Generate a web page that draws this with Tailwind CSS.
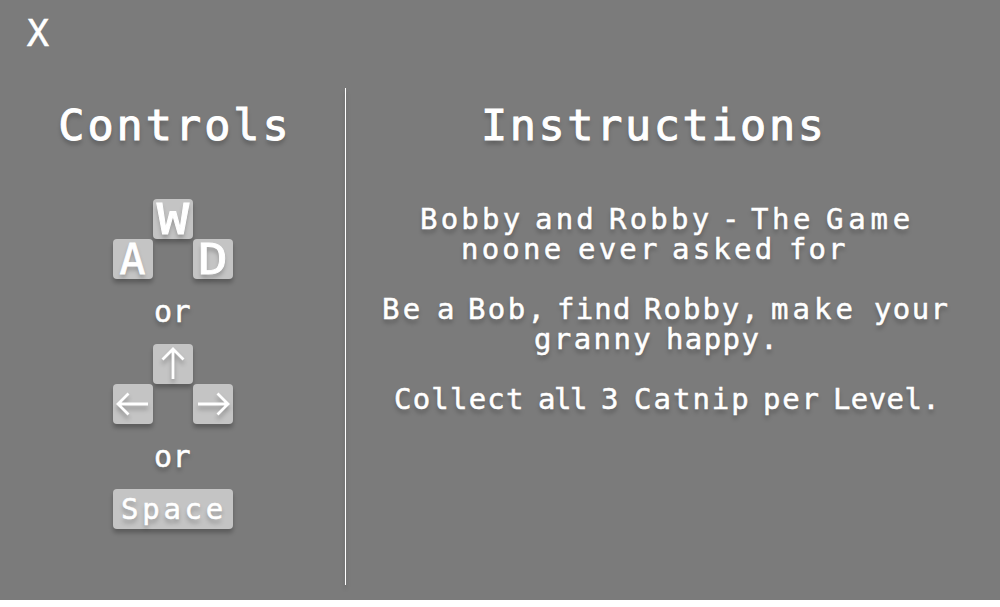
<!DOCTYPE html>
<html lang="en">
<head>
<meta charset="utf-8">
<title>Controls and Instructions</title>
<script src="https://cdn.jsdelivr.net/npm/@tailwindcss/browser@4"></script>
</head>
<body class="bg-white">
<main class="relative flex h-[600px] w-[1000px] overflow-hidden bg-[#7b7b7b] font-['DejaVu_Sans_Mono',monospace] text-white [-webkit-text-stroke:0.5px_white]">
  <button class="absolute left-[26px] top-[14px] h-10 w-6 text-[37px] leading-10" aria-label="Close">X</button>

  <section class="flex w-[345px] flex-col items-center pt-[100px] [text-shadow:0_4px_4px_rgba(0,0,0,0.25)]">
    <h1 class="h-[50px] whitespace-nowrap pl-[5px] text-[43.5px] leading-[50px] tracking-[3px] [-webkit-text-stroke:1px_white]">Controls</h1>

    <div class="mt-[49px] grid grid-cols-3 text-[43px] leading-10 [-webkit-text-stroke:0.8px_white]">
      <kbd class="col-start-2 flex size-10 items-center justify-center rounded bg-[#c4c4c4] font-['DejaVu_Sans_Mono',monospace] shadow-[0_4px_4px_rgba(0,0,0,0.25)]"><span class="scale-x-125">W</span></kbd>
      <kbd class="col-start-1 flex size-10 items-center justify-center rounded bg-[#c4c4c4] font-['DejaVu_Sans_Mono',monospace] shadow-[0_4px_4px_rgba(0,0,0,0.25)]"><span>A</span></kbd>
      <kbd class="col-start-3 flex size-10 items-center justify-center rounded bg-[#c4c4c4] font-['DejaVu_Sans_Mono',monospace] shadow-[0_4px_4px_rgba(0,0,0,0.25)]"><span class="scale-x-115">D</span></kbd>
    </div>

    <p class="h-[65px] text-[30px] leading-[65px] tracking-[0.5px]">or</p>

    <div class="grid grid-cols-3">
      <div class="col-start-2 size-10 rounded bg-[#c4c4c4] shadow-[0_4px_4px_rgba(0,0,0,0.25)]">
        <svg class="size-10 drop-shadow-[0_4px_2px_rgba(0,0,0,0.25)]" viewBox="0 0 40 40" fill="none" stroke="white" stroke-width="2.8"><path d="M20 35V5M9.500 15.500L20 5L30.500 15.500"/></svg>
      </div>
      <div class="col-start-1 size-10 rounded bg-[#c4c4c4] shadow-[0_4px_4px_rgba(0,0,0,0.25)]">
        <svg class="size-10 drop-shadow-[0_4px_2px_rgba(0,0,0,0.25)]" viewBox="0 0 40 40" fill="none" stroke="white" stroke-width="2.8"><path d="M35 20H5M15.500 9.500L5 20L15.500 30.500"/></svg>
      </div>
      <div class="col-start-3 size-10 rounded bg-[#c4c4c4] shadow-[0_4px_4px_rgba(0,0,0,0.25)]">
        <svg class="size-10 drop-shadow-[0_4px_2px_rgba(0,0,0,0.25)]" viewBox="0 0 40 40" fill="none" stroke="white" stroke-width="2.8"><path d="M5 20H35M24.500 9.500L35 20L24.500 30.500"/></svg>
      </div>
    </div>

    <p class="h-[65px] text-[30px] leading-[65px] tracking-[0.5px]">or</p>

    <kbd class="flex h-10 w-[120px] justify-center rounded bg-[#c4c4c4] pl-[3px] font-['DejaVu_Sans_Mono',monospace] text-[29px] leading-[41px] tracking-[3.7px] shadow-[0_4px_4px_rgba(0,0,0,0.25)]">Space</kbd>
  </section>

  <div class="mt-[88px] h-[497px] w-px bg-white shadow-[0_4px_4px_rgba(0,0,0,0.25)]"></div>

  <section class="flex-1 pt-[100px] [text-shadow:0_4px_4px_rgba(0,0,0,0.25)]">
    <h1 class="h-[50px] whitespace-nowrap pl-[135px] text-[43.5px] leading-[50px] tracking-[2.6px] [-webkit-text-stroke:1px_white]">Instructions</h1>
    <div class="mt-[54px] text-[29px] leading-[30px] tracking-[3.2px]">
      <p class="flex h-[30px] pl-[74px]"><span class="w-[115px]">Bobby </span><span class="w-[74px]">and </span><span class="w-[113px]">Robby </span><span class="w-[29px]">- </span><span class="w-[75px] tracking-[3.6px]">The </span><span class="tracking-[4.8px]">Game</span></p>
      <p class="flex h-[30px] pl-[115px]"><span class="w-[117px]">noone </span><span class="w-[94px]">ever </span><span class="w-[117px]">asked </span><span class="tracking-[2px]">for</span></p>
      <p class="mt-[30px] flex h-[30px] pl-[36px]"><span class="w-[55px]">Be </span><span class="w-[31px]">a </span><span class="w-[89px] tracking-[2.4px]">Bob, </span><span class="w-[87px] tracking-[1.2px]">find </span><span class="w-[127px] tracking-[2px]">Robby, </span><span class="w-[103px] tracking-[4px]">make </span><span class="tracking-[1.4px]">your</span></p>
      <p class="flex h-[30px] pl-[188px]"><span class="w-[132px] tracking-[2.4px]">granny </span><span class="tracking-[1.4px]">happy.</span></p>
      <p class="mt-[30px] flex h-[30px] pl-[48px]"><span class="w-[144px] tracking-[1.2px]">Collect </span><span class="w-[63px] tracking-[-1.4px]">all </span><span class="w-[33px]">3 </span><span class="w-[129px] tracking-[2px]">Catnip </span><span class="w-[70px] tracking-[1.8px]">per </span><span class="tracking-[0.4px]">Level.</span></p>
    </div>
  </section>
</main>
</body>
</html>
